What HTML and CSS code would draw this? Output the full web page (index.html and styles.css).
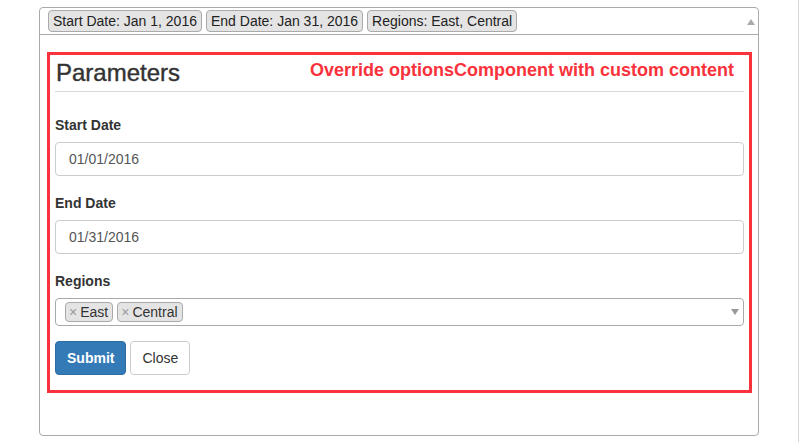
FILE: index.html
```html
<!DOCTYPE html>
<html lang="en">
<head>
<meta charset="utf-8">
<title>Parameters</title>
<link rel="stylesheet" href="styles.css">
</head>
<body>
<div class="page">
  <div class="widget">
    <div class="widget-head">
      <span class="pill">Start Date: Jan 1, 2016</span>
      <span class="pill">End Date: Jan 31, 2016</span>
      <span class="pill">Regions: East, Central</span>
      <span class="arrow-up"></span>
    </div>
    <div class="widget-body">
      <div class="custom">
        <div class="params-head">
          <h3 class="params-title">Parameters</h3>
          <span class="params-note">Override optionsComponent with custom content</span>
        </div>
        <div class="form-group date-group first">
          <label class="form-label">Start Date</label>
          <input class="form-control" type="text" value="01/01/2016">
        </div>
        <div class="form-group date-group">
          <label class="form-label">End Date</label>
          <input class="form-control" type="text" value="01/31/2016">
        </div>
        <div class="form-group">
          <label class="form-label">Regions</label>
          <div class="multi-select">
            <span class="choice"><span class="choice-x">×</span>East</span>
            <span class="choice"><span class="choice-x">×</span>Central</span>
            <span class="arrow-down"></span>
          </div>
        </div>
        <div class="actions">
          <button class="btn btn-primary" type="button">Submit</button>
          <button class="btn btn-default" type="button">Close</button>
        </div>
      </div>
    </div>
  </div>
</div>
</body>
</html>
```

FILE: styles.css
```css
* {
  box-sizing: border-box;
}

html, body {
  margin: 0;
  padding: 0;
  background: #fff;
}

body {
  font-family: "Liberation Sans", Arial, sans-serif;
  font-size: 14px;
  color: #333;
}

.page {
  width: 799px;
  height: 442px;
  border-right: 1px solid #d6d6d6;
  padding: 7px 0 0 39px;
}

.widget {
  width: 720px;
  height: 429px;
  border: 1px solid #aaa;
  border-radius: 4px;
}

.widget-head {
  height: 27px;
  border-bottom: 1px solid #aaa;
  display: flex;
  align-items: center;
  gap: 4px;
  padding: 0 3px 0 8px;
}

.pill {
  height: 22px;
  line-height: 20px;
  padding: 0 4px;
  border: 1px solid #aaa;
  border-radius: 4px;
  background: #e4e4e4;
  color: #222;
  font-size: 14px;
  white-space: nowrap;
}

.arrow-up {
  margin-left: auto;
  margin-top: 2px;
  width: 0;
  height: 0;
  border-left: 4px solid transparent;
  border-right: 4px solid transparent;
  border-bottom: 6px solid #aaa;
}

.widget-body {
  padding: 17px 6px 0 7px;
}

.custom {
  border: 3px solid #fa323c;
  padding: 0 5px 15px;
}

.params-head {
  display: flex;
  justify-content: space-between;
  align-items: flex-start;
  margin-top: 5px;
  padding-bottom: 5px;
  border-bottom: 1px solid #d9d9d9;
}

.params-title {
  margin: 0 0 0 1px;
  font-size: 24px;
  font-weight: normal;
  line-height: 26.4px;
  color: #333;
  -webkit-text-stroke: 0.4px #333;
}

.params-note {
  margin-top: 0;
  padding-right: 10px;
  font-size: 18px;
  font-weight: bold;
  line-height: 20px;
  color: #fa323c;
}

.form-group {
  margin-bottom: 15px;
}

.form-group.first {
  margin-top: 23px;
}

.date-group {
  margin-bottom: 17px;
}

.form-label {
  display: block;
  margin-bottom: 7px;
  font-weight: bold;
  line-height: 20px;
  color: #333;
}

.form-control {
  display: block;
  width: 100%;
  height: 34px;
  padding: 6px 13px;
  font-family: "Liberation Sans", Arial, sans-serif;
  font-size: 14px;
  color: #555;
  background: #fff;
  border: 1px solid #ccc;
  border-radius: 4px;
  outline: none;
}

.multi-select {
  height: 28px;
  display: flex;
  align-items: center;
  gap: 4px;
  padding: 0 4px 0 9px;
  border: 1px solid #aaa;
  border-radius: 4px;
}

.choice {
  height: 20px;
  line-height: 18px;
  padding: 0 4px 0 3px;
  border: 1px solid #aaa;
  border-radius: 4px;
  background: #e4e4e4;
  color: #333;
  white-space: nowrap;
}

.choice-x {
  color: #999;
  margin-right: 3px;
}

.arrow-down {
  margin-left: auto;
  width: 0;
  height: 0;
  border-left: 4px solid transparent;
  border-right: 4px solid transparent;
  border-top: 6px solid #999;
}

.actions {
  display: flex;
  gap: 4px;
}

.btn {
  height: 34px;
  padding: 0 11px;
  font-family: "Liberation Sans", Arial, sans-serif;
  font-size: 14px;
  border-radius: 4px;
  border: 1px solid transparent;
  cursor: pointer;
}

.btn-primary {
  background: #337ab7;
  border-color: #2e6da4;
  color: #fff;
  font-weight: bold;
}

.btn-default {
  background: #fff;
  border-color: #ccc;
  color: #333;
}
```
